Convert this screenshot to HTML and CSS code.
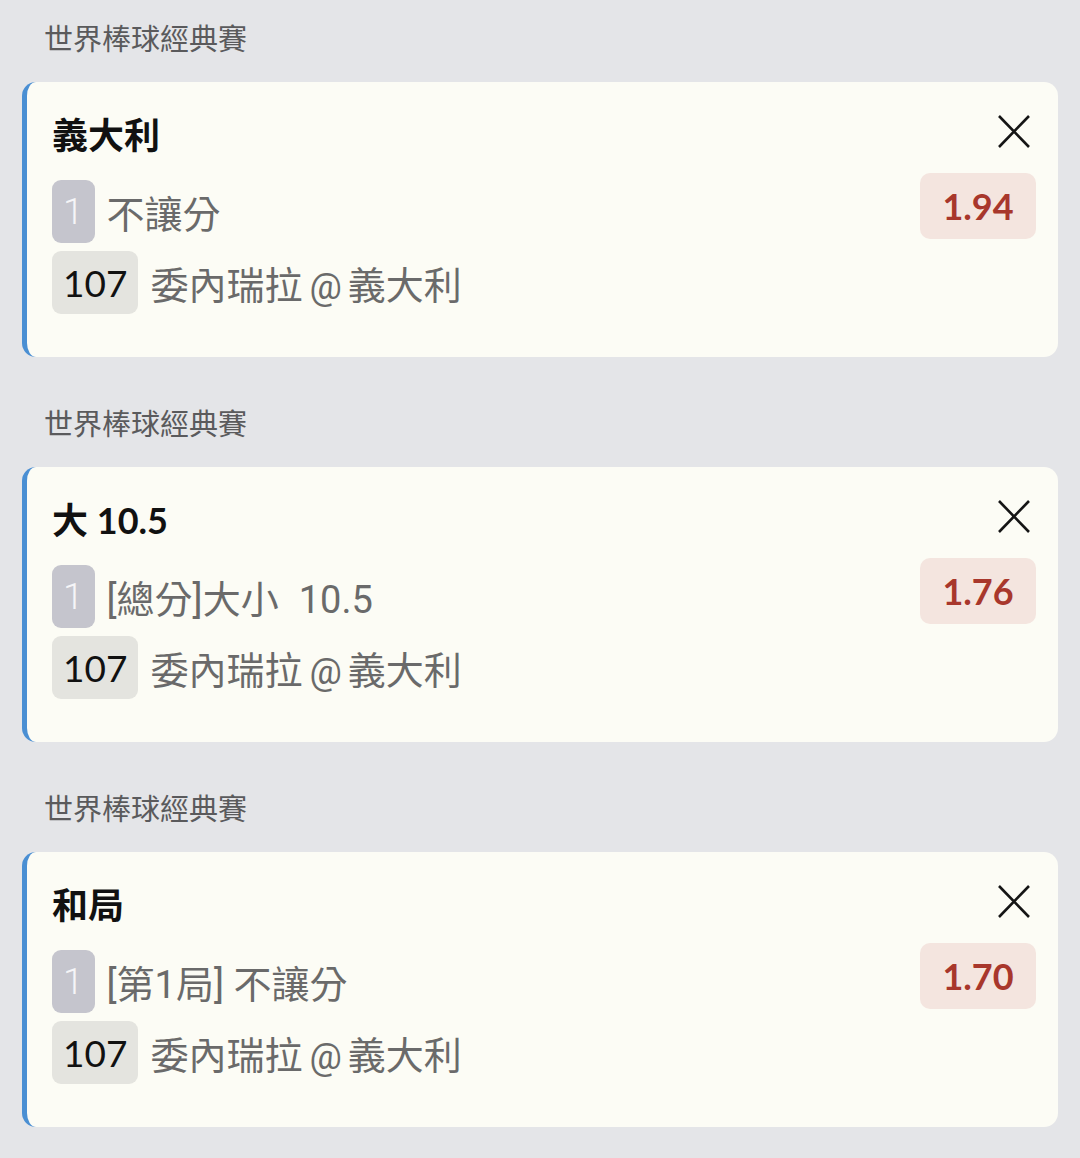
FILE: index.html
```html
<!DOCTYPE html>
<html>
<head>
    <meta charset="utf-8">
    <title>投注單</title>
    <link rel="stylesheet" href="styles.css">
</head>
<body>
    <div class="section">
        <div class="league">世界棒球經典賽</div>
        <div class="bet">
            <div class="bet-main">
                <div class="pick">義大利</div>
                <div class="row">
                    <span class="tag tag-period">1</span>
                    <span class="desc">不讓分</span>
                </div>
                <div class="row">
                    <span class="tag tag-game">107</span>
                    <span class="desc">委內瑞拉<span class="at">@</span>義大利</span>
                </div>
            </div>
            <div class="bet-side">
                <button class="close" aria-label="移除">
                    <svg width="44" height="44" viewBox="0 0 44 44"><path d="M7 6 L37 37 M37 6 L7 37" stroke="#151515" stroke-width="2.6" fill="none"/></svg>
                </button>
                <div class="odds">1.94</div>
            </div>
        </div>
    </div>

    <div class="section">
        <div class="league">世界棒球經典賽</div>
        <div class="bet">
            <div class="bet-main">
                <div class="pick">大 10.5</div>
                <div class="row">
                    <span class="tag tag-period">1</span>
                    <span class="desc">[總分]大小<span class="line">10.5</span></span>
                </div>
                <div class="row">
                    <span class="tag tag-game">107</span>
                    <span class="desc">委內瑞拉<span class="at">@</span>義大利</span>
                </div>
            </div>
            <div class="bet-side">
                <button class="close" aria-label="移除">
                    <svg width="44" height="44" viewBox="0 0 44 44"><path d="M7 6 L37 37 M37 6 L7 37" stroke="#151515" stroke-width="2.6" fill="none"/></svg>
                </button>
                <div class="odds">1.76</div>
            </div>
        </div>
    </div>

    <div class="section">
        <div class="league">世界棒球經典賽</div>
        <div class="bet">
            <div class="bet-main">
                <div class="pick">和局</div>
                <div class="row">
                    <span class="tag tag-period">1</span>
                    <span class="desc">[第1局] 不讓分</span>
                </div>
                <div class="row">
                    <span class="tag tag-game">107</span>
                    <span class="desc">委內瑞拉<span class="at">@</span>義大利</span>
                </div>
            </div>
            <div class="bet-side">
                <button class="close" aria-label="移除">
                    <svg width="44" height="44" viewBox="0 0 44 44"><path d="M7 6 L37 37 M37 6 L7 37" stroke="#151515" stroke-width="2.6" fill="none"/></svg>
                </button>
                <div class="odds">1.70</div>
            </div>
        </div>
    </div>
</body>
</html>
```

FILE: styles.css
```css
body {
    margin: 0;
    padding: 19px 22px 0 22px;
    background-color: #e4e5e8;
    font-family: Lato, "Noto Sans CJK TC", sans-serif;
}

.section {
    margin-bottom: 47px;
}

.league {
    font-size: 29px;
    line-height: 40px;
    color: #5a5a5c;
    padding-left: 22px;
    margin-bottom: 23px;
}

.bet {
    display: flex;
    justify-content: space-between;
    height: 275px;
    box-sizing: border-box;
    padding: 28px 22px 43px 25px;
    background-color: #fcfcf5;
    border-left: 5px solid #4a8fd3;
    border-radius: 14px;
}

.pick {
    font-size: 36px;
    font-weight: bold;
    line-height: 50px;
    color: #111;
    margin-bottom: 20px;
}

.row {
    display: flex;
    align-items: center;
    margin-bottom: 8px;
}

.tag {
    display: inline-flex;
    align-items: center;
    height: 63px;
    padding: 0 10px;
    border-radius: 9px;
    font-size: 37px;
    margin-right: 12px;
}

.tag-period {
    background-color: #c5c5cd;
    color: #f5f5f7;
    font-family: Roboto, "Noto Sans CJK TC", sans-serif;
    font-weight: 300;
    padding: 0 11px;
}

.tag-game {
    background-color: #e4e4df;
    color: #111;
    padding: 0 11px;
}

.desc {
    font-family: Roboto, "Noto Sans CJK TC", sans-serif;
    font-size: 38px;
    color: #6a6a6a;
}

.desc .at {
    font-size: 36px;
    margin: 0 6px 0 7px;
}

.desc .line {
    margin-left: 20px;
}

.bet-side {
    display: flex;
    flex-direction: column;
    align-items: flex-end;
}

.close {
    width: 44px;
    height: 44px;
    padding: 0;
    border: none;
    background: none;
    cursor: pointer;
}

.close svg {
    display: block;
}

.odds {
    margin-top: 19px;
    width: 116px;
    height: 66px;
    line-height: 66px;
    text-align: center;
    border-radius: 10px;
    background-color: #f4e5df;
    color: #a8372c;
    font-size: 36px;
    font-weight: bold;
}
```
